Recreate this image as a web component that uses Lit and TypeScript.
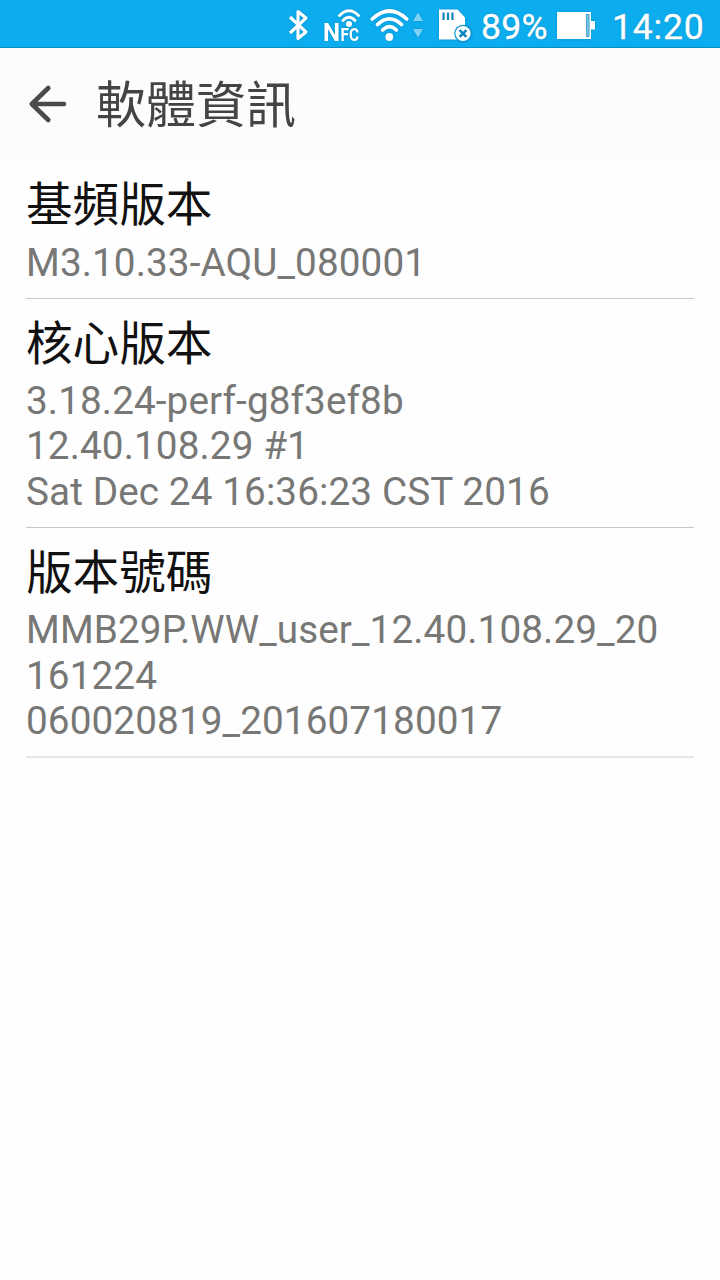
import { LitElement, html, css } from "lit";
import { customElement, property } from "lit/decorators.js";

@customElement("status-bar")
class StatusBar extends LitElement {
  static styles = css`
    :host { display: block; }
    .bar {
      box-sizing: border-box; height: 48px; background: #0cadef;
      border-bottom: 1px solid #0a8dc2;
      display: flex; align-items: flex-start; justify-content: flex-end;
      padding-right: 16px; color: #fff;
      font-family: Roboto, sans-serif;
      white-space: nowrap;
    }
    svg { display: block; flex: none; filter: drop-shadow(0 0 1px rgba(0, 60, 100, 0.3)); }
    .nfc { font-family: Roboto, sans-serif; font-weight: 700; fill: #fff; }
    .label {
      font-size: 35.5px; line-height: 40px; padding-top: 7px;
      -webkit-text-stroke: 0.4px #fff;
      text-shadow: 0 0 2px rgba(0, 60, 100, 0.4); flex: none;
    }
    .percent { width: 75px; letter-spacing: 0.3px; }
    .clock { width: 92px; margin-left: 16px; letter-spacing: 0.8px; }
  `;
  render() {
    return html`
      <div class="bar">
        <svg width="201" height="47" viewBox="280 0 201 47" fill="none" stroke="#fff">
          <path d="M290 17 L306 32 L298 38.5 V11.5 L306 18 L290 33" stroke-width="3.1" stroke-linejoin="round" />
          <path d="M339.5 15.5 Q349 6 358.5 15.5 M343 20.5 Q349 14 355 20.5" stroke-width="3" stroke-linecap="round" />
          <text class="nfc" x="323" y="40.5" font-size="26.5" textLength="17" lengthAdjust="spacingAndGlyphs" stroke="none">N</text>
          <text class="nfc" x="340.5" y="40.5" font-size="17.5" textLength="18.5" lengthAdjust="spacingAndGlyphs" stroke="none">FC</text>
          <circle cx="349" cy="24" r="3" fill="#fff" stroke="none" />
          <g stroke-width="3.6" stroke-linecap="round">
            <path d="M372.2 19 Q389.5 3 406.8 19" />
            <path d="M377.4 24.6 Q389.5 13 401.6 24.6" />
            <path d="M382.6 30 Q389.5 23.4 396.4 30" />
          </g>
          <circle cx="389.3" cy="37" r="3.9" fill="#fff" stroke="none" />
          <path d="M418 12.5 L423 21 H413 Z M413 29 H423 L418 37.5 Z" fill="#7ed2f5" stroke="none" />
          <path d="M439 9.5 H457.5 L465 17.5 V39.5 H439 Z" fill="#fff" stroke="none" />
          <path d="M443.5 12.5 V20 M448 12.5 V20 M452.5 12.5 V20" stroke="#1685b8" stroke-width="2.2" />
          <circle cx="463" cy="33.5" r="8.8" fill="#0b95d0" stroke="none" />
          <circle cx="463" cy="33.5" r="7.6" fill="#fff" stroke="none" />
          <path d="M459.6 30.1 L466.4 36.9 M466.4 30.1 L459.6 36.9" stroke="#0b86bd" stroke-width="2.6" />
        </svg>
        <span class="label percent">89%</span>
        <svg width="40" height="47" viewBox="556 0 40 47">
          <path d="M557 12 H591 V21 H595 V29.5 H591 V39 H557 Z" fill="#fff" />
          <rect x="586.3" y="14.5" width="2.8" height="22" fill="#6fc3e8" stroke="#3a98c4" stroke-width="0.8" />
        </svg>
        <span class="label clock">14:20</span>
      </div>
    `;
  }
}

@customElement("title-bar")
class TitleBar extends LitElement {
  static styles = css`
    :host { display: block; }
    .bar {
      box-sizing: border-box; height: 112px; background: #fcfcfc; display: flex; align-items: flex-start;
      padding: 24px 0 0 27px; gap: 29px;
    }
    .back { display: block; flex: none; margin-top: 12px; }
    .title {
      margin: 0; font: 400 50px/58px "Noto Sans CJK TC", sans-serif; color: #444;
    }
  `;
  @property() heading = "";
  render() {
    return html`
      <div class="bar">
        <svg class="back" width="40" height="40" viewBox="28 84 40 40" fill="none" stroke="#4a4a4a"
          stroke-width="4.6" stroke-linecap="round" stroke-linejoin="round">
          <path d="M49.3 88 L32.8 104 L49.3 120 M32.8 104 H65" />
        </svg>
        <h1 class="title">${this.heading}</h1>
      </div>
    `;
  }
}

@customElement("info-item")
class InfoItem extends LitElement {
  static styles = css`
    :host { display: block; }
    .item { margin: 0 26px; padding: 14px 0 12.83px; border-bottom: 1px solid #c8c8c8; }
    :host(:last-of-type) .item { border-bottom: 2px solid #e6e6e6; }
    .name {
      margin: 0 0 11.5px; font: 400 46.6px/54px "Noto Sans CJK TC", sans-serif; color: #111;
    }
    .line {
      font: 400 38.7px/45.33px Roboto, sans-serif; letter-spacing: 0.1px; color: #777775; white-space: nowrap;
    }
  `;
  @property() name = "";
  @property({ attribute: false }) lines: string[] = [];
  render() {
    return html`
      <div class="item">
        <h2 class="name">${this.name}</h2>
        ${this.lines.map((line) => html`<div class="line">${line}</div>`)}
      </div>
    `;
  }
}

@customElement("app-root")
class AppRoot extends LitElement {
  static styles = css`
    :host { display: block; }
    .screen { min-height: 1280px; background: #fefefe; }
  `;
  private items = [
    { name: "基頻版本", lines: ["M3.10.33-AQU_080001"] },
    { name: "核心版本", lines: ["3.18.24-perf-g8f3ef8b", "12.40.108.29 #1", "Sat Dec 24 16:36:23 CST 2016"] },
    { name: "版本號碼", lines: ["MMB29P.WW_user_12.40.108.29_20", "161224", "060020819_201607180017"] },
  ];
  render() {
    return html`
      <main class="screen">
        <status-bar></status-bar>
        <title-bar heading="軟體資訊"></title-bar>
        ${this.items.map((i) => html`<info-item .name=${i.name} .lines=${i.lines}></info-item>`)}
      </main>
    `;
  }
}
